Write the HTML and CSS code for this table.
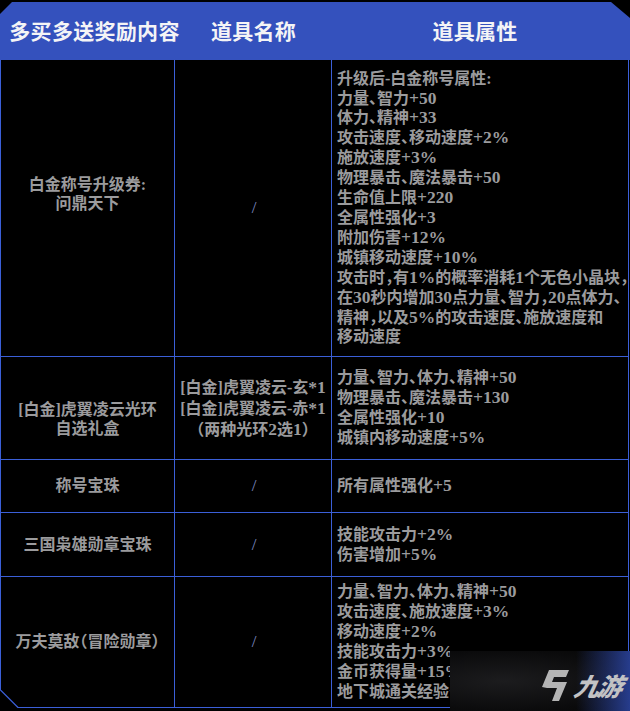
FILE: index.html
```html
<!DOCTYPE html>
<html lang="zh-CN">
<head>
<meta charset="utf-8">
<title>多买多送奖励内容</title>
<link rel="stylesheet" href="styles.css">
</head>
<body>
<div class="board">
  <div class="head">
    <div class="hcell">多买多送奖励内容</div>
    <div class="hcell">道具名称</div>
    <div class="hcell">道具属性</div>
  </div>
  <div class="tbl">
    <div class="cell c1 up"><div class="txt">白金称号升级券:<br>问鼎天下</div></div>
    <div class="cell c2"><span class="slash">/</span></div>
    <div class="cell c3"><div class="txt">升级后-白金称号属性:<br>力量、智力<span class="n">+50</span><br>体力、精神<span class="n">+33</span><br>攻击速度、移动速度<span class="n">+2%</span><br>施放速度<span class="n">+3%</span><br>物理暴击、魔法暴击<span class="n">+50</span><br>生命值上限<span class="n">+220</span><br>全属性强化<span class="n">+3</span><br>附加伤害<span class="n">+12%</span><br>城镇移动速度<span class="n">+10%</span><br>攻击时，有<span class="n">1%</span>的概率消耗<span class="n">1</span>个无色小晶块，<br>在<span class="n">30</span>秒内增加<span class="n">30</span>点力量、智力，<span class="n">20</span>点体力、<br>精神，以及<span class="n">5%</span>的攻击速度、施放速度和<br>移动速度</div></div>

    <div class="cell c1 down"><div class="txt">[白金]虎翼凌云光环<br>自选礼盒</div></div>
    <div class="cell c2"><div class="txt">[白金]虎翼凌云-玄<span class="n">*1</span><br>[白金]虎翼凌云-赤<span class="n">*1</span><br>（两种光环<span class="n">2</span>选<span class="n">1</span>）</div></div>
    <div class="cell c3"><div class="txt">力量、智力、体力、精神<span class="n">+50</span><br>物理暴击、魔法暴击<span class="n">+130</span><br>全属性强化<span class="n">+10</span><br>城镇内移动速度<span class="n">+5%</span></div></div>

    <div class="cell c1"><div class="txt">称号宝珠</div></div>
    <div class="cell c2"><span class="slash">/</span></div>
    <div class="cell c3"><div class="txt">所有属性强化<span class="n">+5</span></div></div>

    <div class="cell c1"><div class="txt">三国枭雄勋章宝珠</div></div>
    <div class="cell c2"><span class="slash">/</span></div>
    <div class="cell c3"><div class="txt">技能攻击力<span class="n">+2%</span><br>伤害增加<span class="n">+5%</span></div></div>

    <div class="cell c1"><div class="txt">万夫莫敌（冒险勋章）</div></div>
    <div class="cell c2"><span class="slash">/</span></div>
    <div class="cell c3"><div class="txt">力量、智力、体力、精神<span class="n">+50</span><br>攻击速度、施放速度<span class="n">+3%</span><br>移动速度<span class="n">+2%</span><br>技能攻击力<span class="n">+3%</span><br>金币获得量<span class="n">+15%</span><br>地下城通关经验<span class="n">+10%</span></div></div>
  </div>

  <svg class="corner" width="20" height="20" viewBox="0 0 20 20">
    <polygon points="0,0 0,20 20,20" fill="#000"/>
    <line x1="0.5" y1="0" x2="18" y2="17.5" stroke="#3b5fd8" stroke-width="1.2"/>
  </svg>

  <div class="mark">
    <svg class="mark-icon" width="36" height="36" viewBox="0 0 36 36">
      <path d="M4 20 L11 3 L31 3 L28 10 L16 10 L14 15 L29 15 L21 34 L14 34 L19 21 L9 21 Z" fill="#b4b4b4"/>
    </svg>
    <span class="mark-text">九游</span>
  </div>
</div>
</body>
</html>
```
FILE: styles.css
```css
html, body {
  margin: 0;
  padding: 0;
  background: #000;
}

.board {
  position: relative;
  width: 630px;
  height: 711px;
  background: #000;
  overflow: hidden;
  font-family: "Liberation Serif", "Noto Sans CJK SC", serif;
}

.head {
  margin-top: 2px;
  height: 58px;
  display: grid;
  grid-template-columns: 175px 157px 298px;
  background: #3451bd;
  clip-path: polygon(0 12px, 12px 0, 611px 0, 630px 16px, 630px 100%, 0 100%);
}

.hcell {
  display: flex;
  align-items: center;
  justify-content: center;
  color: #f4f4f6;
  font-family: "Noto Sans CJK SC", sans-serif;
  font-weight: 700;
  font-size: 21px;
  letter-spacing: 0.3px;
  padding-bottom: 2px;
}

.hcell:first-child {
  padding-left: 14px;
  white-space: nowrap;
}

.hcell:nth-child(3) {
  padding-right: 12px;
}

.tbl {
  display: grid;
  width: 629px;
  grid-template-columns: 174px 157px 297px;
  grid-template-rows: 297px 103px 53px 64px 131px;
  border-left: 1px solid #3b5fd8;
}

.cell {
  border-right: 1px solid #3b5fd8;
  border-bottom: 1px solid #3b5fd8;
  display: flex;
  align-items: center;
  color: #9b9b9d;
  font-size: 16px;
  line-height: 20px;
  font-weight: 700;
  font-feature-settings: "halt";
  white-space: nowrap;
}

.n {
  font-size: 17.5px;
}

.c1, .c2 {
  justify-content: center;
  text-align: center;
}

.c1.up {
  padding-bottom: 28px;
  line-height: 19px;
}

.c1.down {
  padding-top: 22px;
  line-height: 19px;
}

.c3 {
  padding-left: 5px;
  line-height: 19.9px;
}

.slash {
  color: #7d8ac0;
  font-weight: 400;
  font-size: 17px;
  padding-left: 2px;
}

.corner {
  position: absolute;
  left: 0;
  top: 690px;
}

.mark {
  position: absolute;
  left: 450px;
  top: 651px;
  width: 180px;
  height: 60px;
  display: flex;
  align-items: center;
  padding-left: 88px;
  box-sizing: border-box;
  gap: 1px;
  background:
    linear-gradient(90deg, rgba(0,0,0,0) 0%, rgba(0,0,0,0) 70%, rgba(42,66,155,0.9) 100%),
    radial-gradient(ellipse at 30% 50%, #1c1c1e 0%, #0b0b0c 70%, #060606 100%);
}

.mark-icon {
  flex: none;
  margin-top: 8px;
}

.mark-text {
  color: #c2c2c4;
  font-family: "Noto Sans CJK SC", sans-serif;
  font-weight: 900;
  font-style: italic;
  font-size: 25px;
  line-height: 30px;
  margin-top: 8px;
  transform: skewX(-12deg);
  letter-spacing: -2px;
}
```
